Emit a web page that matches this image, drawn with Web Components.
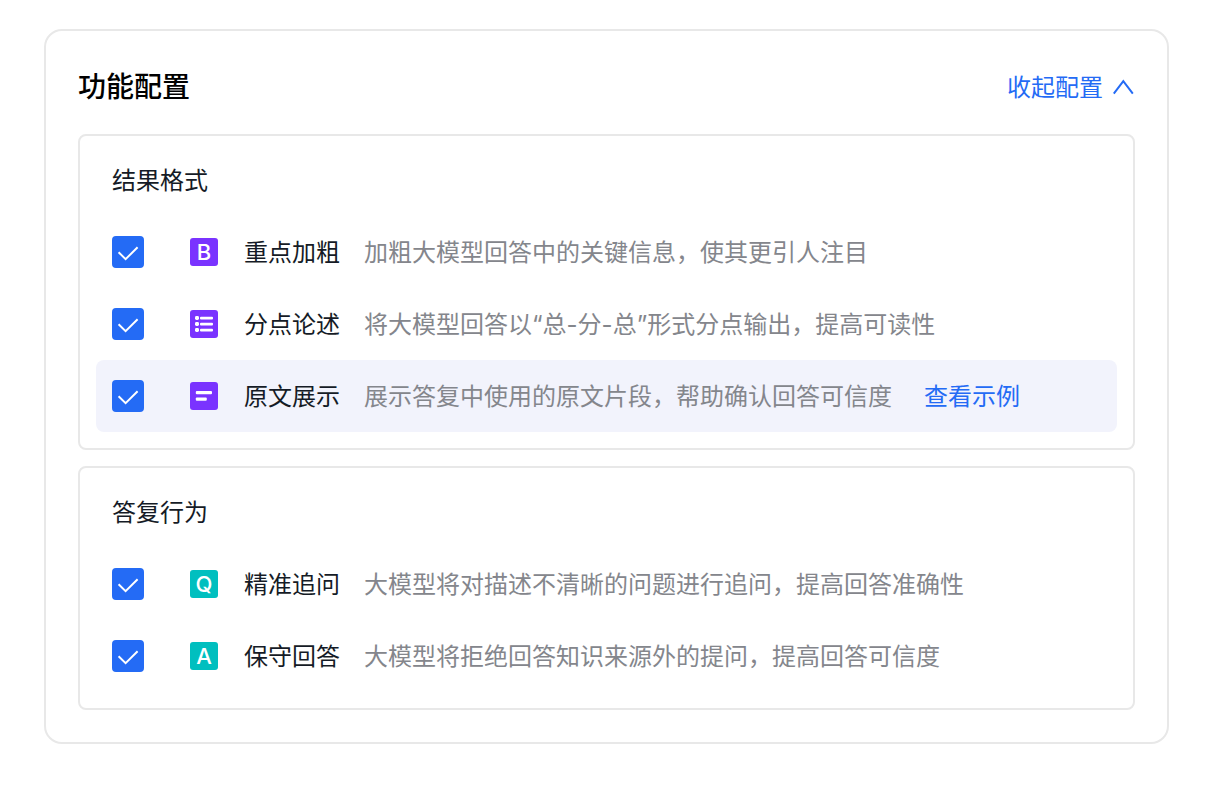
<!DOCTYPE html>
<html lang="zh-CN">
<head>
<meta charset="utf-8">
<meta name="viewport" content="width=device-width, initial-scale=1">
<title>功能配置</title>
<style>
  :root {
    --blue: #246bf5;
    --purple: #7a33ff;
    --teal: #00bfbf;
    --line: #e8e8e8;
    --text: #151b26;
    --muted: #84868c;
    --hover: #f2f3fc;
  }
  body {
    margin: 0;
    padding: 29px 45px 48px 44px;
    background: #fff;
    color: var(--text);
    font: 24px/32px Inter, "Noto Sans CJK SC", sans-serif;
  }
</style>
</head>
<body>
<config-panel>
  <span slot="title">功能配置</span>
  <config-group>
    <span slot="title">结果格式</span>
    <config-option><feature-badge slot="icon">B</feature-badge>重点加粗<span slot="desc">加粗大模型回答中的关键信息，使其更引人注目</span></config-option>
    <config-option><feature-badge slot="icon"><svg width="28" height="28" viewBox="0 0 28 28" fill="#fff" aria-hidden="true"><rect x="5" y="6" width="4" height="4" rx="1.4"/><rect x="5" y="12" width="4" height="4" rx="1.4"/><rect x="5" y="18" width="4" height="4" rx="1.4"/><rect x="10" y="6.8" width="13" height="2.6" rx="1"/><rect x="10" y="12.8" width="13" height="2.6" rx="1"/><rect x="10" y="18.8" width="13" height="2.6" rx="1"/></svg></feature-badge>分点论述<span slot="desc">将大模型回答以“总-分-总”形式分点输出，提高可读性</span></config-option>
    <config-option active><feature-badge slot="icon"><svg width="28" height="28" viewBox="0 0 28 28" fill="#fff" aria-hidden="true"><rect x="5.8" y="9" width="16.2" height="3.2" rx="1"/><rect x="5.8" y="15.6" width="11" height="3.2" rx="1"/></svg></feature-badge>原文展示<span slot="desc">展示答复中使用的原文片段，帮助确认回答可信度</span><text-link slot="action" href="#example">查看示例</text-link></config-option>
  </config-group>
  <config-group>
    <span slot="title">答复行为</span>
    <config-option><feature-badge slot="icon" tone="teal">Q</feature-badge>精准追问<span slot="desc">大模型将对描述不清晰的问题进行追问，提高回答准确性</span></config-option>
    <config-option><feature-badge slot="icon" tone="teal">A</feature-badge>保守回答<span slot="desc">大模型将拒绝回答知识来源外的提问，提高回答可信度</span></config-option>
  </config-group>
</config-panel>

<script>
const attach = (host, html) => {
  const t = document.createElement('template');
  t.innerHTML = html;
  host.attachShadow({ mode: 'open' }).append(t.content.cloneNode(true));
};

// Outer card with the heading and the collapse control
customElements.define('config-panel', class extends HTMLElement {
  constructor() {
    super();
    attach(this, `
      <style>
        :host { display: block; border: 2px solid var(--line); border-radius: 18px; padding: 32px; }
        header { display: flex; align-items: center; justify-content: space-between; min-height: 48px; margin-bottom: 23px; }
        h1 { margin: 0; font-size: 28px; line-height: 40px; font-weight: 500; color: #000; }
        button { display: flex; align-items: center; gap: 10px; border: 0; padding: 0; background: none; font: inherit; color: var(--blue); cursor: pointer; }
        button span { padding-top: 2px; }
        .body { display: grid; gap: 16px; }
        .body[hidden] { display: none; }
        [aria-expanded="false"] svg { transform: rotate(180deg); }
      </style>
      <header>
        <h1><slot name="title"></slot></h1>
        <button type="button" aria-expanded="true"><span>收起配置</span><svg width="22" height="16" viewBox="0 0 22 16" fill="none" stroke="currentColor" stroke-width="2" aria-hidden="true"><path d="M.8 14.6 10.3 2.2 19.8 14.6"/></svg></button>
      </header>
      <div class="body"><slot></slot></div>`);
    const btn = this.shadowRoot.querySelector('button');
    btn.addEventListener('click', () => {
      const open = btn.getAttribute('aria-expanded') !== 'true';
      btn.setAttribute('aria-expanded', open);
      btn.firstChild.textContent = open ? '收起配置' : '展开配置';
      this.shadowRoot.querySelector('.body').hidden = !open;
    });
  }
});

// Bordered section of options
customElements.define('config-group', class extends HTMLElement {
  constructor() {
    super();
    attach(this, `
      <style>
        :host { display: block; border: 2px solid var(--line); border-radius: 8px; padding: 29px 16px 16px; }
        h2 { margin: 0 16px 19px; font: inherit; }
      </style>
      <h2><slot name="title"></slot></h2>
      <slot></slot>`);
  }
});

// One tick-box row
customElements.define('config-option', class extends HTMLElement {
  constructor() {
    super();
    attach(this, `
      <style>
        :host { display: flex; align-items: center; min-height: 72px; box-sizing: border-box; padding: 0 16px; border-radius: 8px; }
        :host([active]) { background: var(--hover); }
        .check { display: grid; flex: none; margin-right: 46px; }
        .check > * { grid-area: 1 / 1; }
        input { appearance: none; width: 32px; height: 32px; margin: 0; box-sizing: border-box; border: 2px solid #c4c7cf; border-radius: 4px; background: #fff; }
        input:checked { background: var(--blue); border-color: var(--blue); }
        .check svg { pointer-events: none; }
        label, .desc, .action { padding-top: 2px; }
        label { flex: none; margin: 0 24px 0 26px; }
        .desc { color: var(--muted); }
        .action { flex: none; margin-left: 32px; }
      </style>
      <span class="check">
        <input type="checkbox" id="tick" checked>
        <svg width="32" height="32" viewBox="0 0 32 32" fill="none" stroke="#fff" stroke-width="2" aria-hidden="true"><path d="M6.6 16.2 13.6 23.2 25.6 11.2"/></svg>
      </span>
      <slot name="icon"></slot>
      <label for="tick"><slot></slot></label>
      <span class="desc"><slot name="desc"></slot></span>
      <span class="action"><slot name="action"></slot></span>`);
  }
});

// Small coloured square with a letter or glyph
customElements.define('feature-badge', class extends HTMLElement {
  constructor() {
    super();
    attach(this, `
      <style>
        :host { display: grid; place-items: center; flex: none; width: 28px; height: 28px; border-radius: 3px; background: var(--purple); color: #fff; font-family: Inter, sans-serif; font-size: 22px; line-height: 28px; font-weight: 500; }
        :host([tone="teal"]) { background: var(--teal); }
      </style>
      <slot></slot>`);
  }
});

customElements.define('text-link', class extends HTMLElement {
  constructor() {
    super();
    attach(this, `
      <style>
        :host { display: block; }
        a { color: var(--blue); text-decoration: none; }
      </style>
      <a><slot></slot></a>`);
    this.shadowRoot.querySelector('a').setAttribute('href', this.getAttribute('href') || '#');
  }
});
</script>
</body>
</html>
